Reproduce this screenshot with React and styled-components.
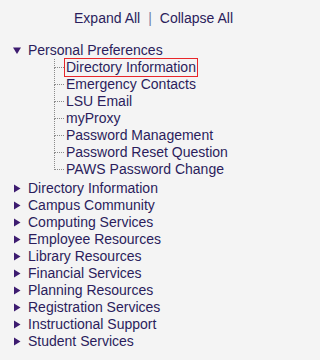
import React from "react";
import styled, { createGlobalStyle } from "styled-components";

const GlobalStyle = createGlobalStyle`
	html, body {
		margin: 0;
		padding: 0;
		background: #f4f4f4;
	}
	body {
		font-family: "Liberation Sans", Arial, sans-serif;
		font-size: 14px;
		color: #2b1d5c;
	}
`;

const Page = styled.div`
	width: 247px;
	height: 360px;
	padding-top: 10px;
	box-sizing: border-box;
`;

const Toolbar = styled.div`
	display: flex;
	justify-content: flex-end;
	align-items: center;
	gap: 8px;
	padding-right: 14px;
	line-height: 17px;
`;

const ToolLink = styled.a`
	color: #2b1d5c;
	text-decoration: none;
	cursor: pointer;
`;

const Divider = styled.span`
	color: #7080a8;
`;

const Tree = styled.ul`
	list-style: none;
	margin: 15px 0 0;
	padding: 0 0 0 13px;
`;

const Node = styled.li`
	line-height: 17px;
`;

const NodeLabel = styled.div`
	display: flex;
	align-items: center;
	gap: 7px;
	cursor: pointer;
`;

const Arrow = styled.span`
	display: block;
	width: 8px;
	height: 9px;
	flex: none;
	color: #3d1c70;

	svg {
		display: block;
	}
`;

const Children = styled.ul`
	list-style: none;
	margin: 0 0 2px 41px;
	padding: 0;
`;

const Leaf = styled.li`
	position: relative;
	line-height: 17px;
	padding-left: 12px;

	&::before {
		content: "";
		position: absolute;
		left: 0;
		top: 8px;
		width: 10px;
		border-top: 1px dotted #8a8a8a;
	}

	&::after {
		content: "";
		position: absolute;
		left: 0;
		top: ${(p) => (p.$first ? "0" : "-9px")};
		height: ${(p) => (p.$first ? "9px" : "18px")};
		border-left: 1px dotted #8a8a8a;
	}
`;

const LeafLink = styled.a`
	display: inline-block;
	color: #2b1d5c;
	text-decoration: none;
	cursor: pointer;
	padding: 0 1px;
	margin-left: -1px;
	outline: ${(p) => (p.$active ? "1px solid #e8262a" : "none")};
	outline-offset: 0;
`;

function Triangle({ open }) {
	return (
		<Arrow>
			<svg width="8" height="9" viewBox="0 0 8 9">
				{open ? (
					<polygon points="0,1.5 8,1.5 4,8" fill="currentColor" />
				) : (
					<polygon points="1,0.5 7.5,4.5 1,8.5" fill="currentColor" />
				)}
			</svg>
		</Arrow>
	);
}

const personal = [
	"Directory Information",
	"Emergency Contacts",
	"LSU Email",
	"myProxy",
	"Password Management",
	"Password Reset Question",
	"PAWS Password Change",
];

const sections = [
	"Directory Information",
	"Campus Community",
	"Computing Services",
	"Employee Resources",
	"Library Resources",
	"Financial Services",
	"Planning Resources",
	"Registration Services",
	"Instructional Support",
	"Student Services",
];

export default function App() {
	return (
		<Page>
			<GlobalStyle />
			<Toolbar>
				<ToolLink>Expand All</ToolLink>
				<Divider>|</Divider>
				<ToolLink>Collapse All</ToolLink>
			</Toolbar>
			<Tree>
				<Node>
					<NodeLabel>
						<Triangle open />
						<span>Personal Preferences</span>
					</NodeLabel>
					<Children>
						{personal.map((item, i) => (
							<Leaf key={item} $first={i === 0}>
								<LeafLink $active={i === 0}>{item}</LeafLink>
							</Leaf>
						))}
					</Children>
				</Node>
				{sections.map((item) => (
					<Node key={item}>
						<NodeLabel>
							<Triangle />
							<span>{item}</span>
						</NodeLabel>
					</Node>
				))}
			</Tree>
		</Page>
	);
}
